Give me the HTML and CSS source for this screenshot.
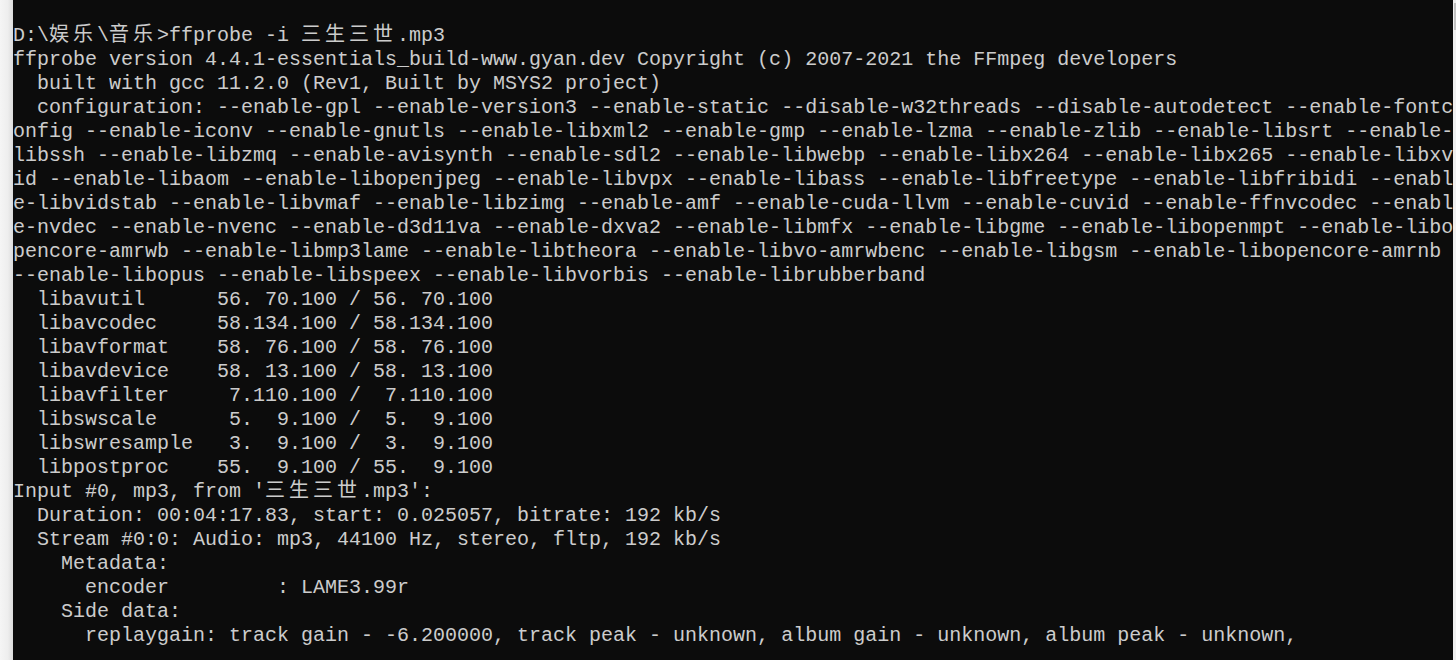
FILE: index.html
```html
<!DOCTYPE html>
<html lang="zh">
<head>
<meta charset="utf-8">
<title>ffprobe</title>
<link rel="stylesheet" href="styles.css">
</head>
<body>
<div class="window">
  <div class="edge"></div>
  <main class="console">
    <div class="ln">D:\<span class="cjk">娱乐</span>\<span class="cjk">音乐</span>&gt;ffprobe -i <span class="cjk">三生三世</span>.mp3</div>
    <div class="ln">ffprobe version 4.4.1-essentials_build-www.gyan.dev Copyright (c) 2007-2021 the FFmpeg developers</div>
    <div class="ln">  built with gcc 11.2.0 (Rev1, Built by MSYS2 project)</div>
    <div class="ln">  configuration: --enable-gpl --enable-version3 --enable-static --disable-w32threads --disable-autodetect --enable-fontc</div>
    <div class="ln">onfig --enable-iconv --enable-gnutls --enable-libxml2 --enable-gmp --enable-lzma --enable-zlib --enable-libsrt --enable-</div>
    <div class="ln">libssh --enable-libzmq --enable-avisynth --enable-sdl2 --enable-libwebp --enable-libx264 --enable-libx265 --enable-libxv</div>
    <div class="ln">id --enable-libaom --enable-libopenjpeg --enable-libvpx --enable-libass --enable-libfreetype --enable-libfribidi --enabl</div>
    <div class="ln">e-libvidstab --enable-libvmaf --enable-libzimg --enable-amf --enable-cuda-llvm --enable-cuvid --enable-ffnvcodec --enabl</div>
    <div class="ln">e-nvdec --enable-nvenc --enable-d3d11va --enable-dxva2 --enable-libmfx --enable-libgme --enable-libopenmpt --enable-libo</div>
    <div class="ln">pencore-amrwb --enable-libmp3lame --enable-libtheora --enable-libvo-amrwbenc --enable-libgsm --enable-libopencore-amrnb </div>
    <div class="ln">--enable-libopus --enable-libspeex --enable-libvorbis --enable-librubberband</div>
    <div class="ln">  libavutil      56. 70.100 / 56. 70.100</div>
    <div class="ln">  libavcodec     58.134.100 / 58.134.100</div>
    <div class="ln">  libavformat    58. 76.100 / 58. 76.100</div>
    <div class="ln">  libavdevice    58. 13.100 / 58. 13.100</div>
    <div class="ln">  libavfilter     7.110.100 /  7.110.100</div>
    <div class="ln">  libswscale      5.  9.100 /  5.  9.100</div>
    <div class="ln">  libswresample   3.  9.100 /  3.  9.100</div>
    <div class="ln">  libpostproc    55.  9.100 / 55.  9.100</div>
    <div class="ln">Input #0, mp3, from '<span class="cjk">三生三世</span>.mp3':</div>
    <div class="ln">  Duration: 00:04:17.83, start: 0.025057, bitrate: 192 kb/s</div>
    <div class="ln">  Stream #0:0: Audio: mp3, 44100 Hz, stereo, fltp, 192 kb/s</div>
    <div class="ln">    Metadata:</div>
    <div class="ln">      encoder         : LAME3.99r</div>
    <div class="ln">    Side data:</div>
    <div class="ln">      replaygain: track gain - -6.200000, track peak - unknown, album gain - unknown, album peak - unknown, </div>
  </main>
  <div class="scrollbar"><div class="thumb"></div></div>
</div>
</body>
</html>
```
FILE: styles.css
```css
html, body {
  margin: 0;
  padding: 0;
  height: 100%;
  overflow: hidden;
  background: #0c0c0c;
}

.window {
  display: flex;
  height: 660px;
  width: 1456px;
}

.edge {
  flex: 0 0 13px;
  background: linear-gradient(to right, #f5f5f5 0%, #eeeeee 60%, #dcdcdc 100%);
}

.console {
  flex: 0 0 1440px;
  background: #0c0c0c;
  color: #cccccc;
  font-family: "Liberation Mono", "DejaVu Sans Mono", monospace;
  font-size: 20px;
  padding-top: 24px;
  box-sizing: border-box;
  overflow: hidden;
}

.ln {
  height: 24px;
  line-height: 24px;
  white-space: pre;
  overflow: visible;
}

.cjk {
  font-family: "Noto Sans CJK SC", "Noto Sans CJK JP", sans-serif;
  font-size: 20px;
  letter-spacing: 4px;
  line-height: 0;
}

.scrollbar {
  flex: 0 0 3px;
  background: #f0f0f0;
  display: flex;
  flex-direction: column;
  align-items: flex-end;
}

.thumb {
  width: 2px;
  height: 27px;
  margin-top: 3px;
  background: #c2c2c2;
}
```
